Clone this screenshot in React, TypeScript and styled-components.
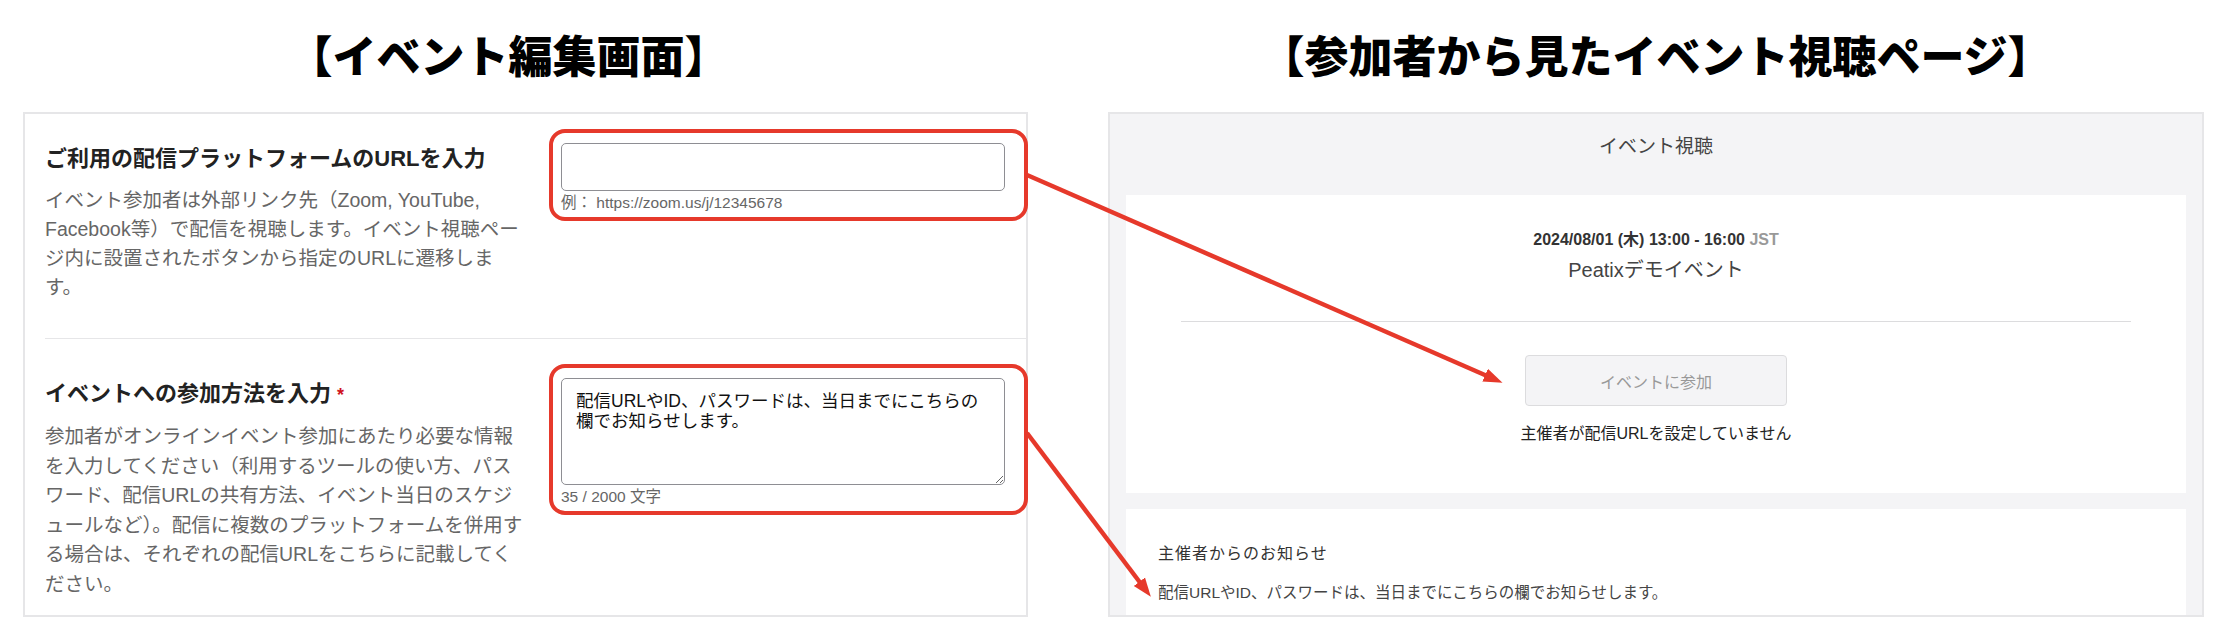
import React from "react";
import styled, { createGlobalStyle } from "styled-components";

const GlobalStyle = createGlobalStyle`
  * {
    box-sizing: border-box;
  }
  body {
    margin: 0;
    background: #fff;
    font-family: "Liberation Sans", "Noto Sans CJK JP", sans-serif;
  }
`;

const Page = styled.div`
  position: relative;
  width: 2222px;
  height: 636px;
  display: flex;
  gap: 80px;
  padding-left: 23px;
  overflow: hidden;
`;

const Column = styled.div<{ $width: number }>`
  width: ${(p) => p.$width}px;
  display: flex;
  flex-direction: column;
`;

const Title = styled.h1<{ $shift?: number }>`
  margin: 31px 0 35px;
  padding-right: ${(p) => p.$shift ?? 0}px;
  font-family: "Noto Sans CJK JP", sans-serif;
  font-size: 44px;
  line-height: 46px;
  font-weight: 900;
  color: #000;
  text-align: center;
  white-space: nowrap;
`;

/* left: event edit form */

const EditPanel = styled.div`
  height: 505px;
  border: 2px solid #e6e6e8;
  background: #fff;
`;

const Section = styled.div<{ $top: number; $divider?: boolean }>`
  margin-left: 20px;
  padding-top: ${(p) => p.$top}px;
  display: flex;
  align-items: flex-start;
  border-bottom: ${(p) => (p.$divider ? "1px solid #e6e6e8" : "none")};
`;

const TextCol = styled.div<{ $bottom: number }>`
  width: 504px;
  flex-shrink: 0;
  padding: 14px 24px ${(p) => p.$bottom}px 0;
`;

const FieldHeading = styled.h2`
  margin: 0 0 11px;
  font-size: 22px;
  line-height: 32px;
  font-weight: 700;
  color: #222;
  white-space: nowrap;
`;

const Required = styled.span`
  margin-left: 6px;
  color: #d0141e;
  font-size: 18px;
`;

const Description = styled.p<{ $lh: number }>`
  margin: 0;
  font-size: 19.5px;
  line-height: ${(p) => p.$lh}px;
  color: #666;
  white-space: nowrap;
`;

const Highlight = styled.div`
  width: 479px;
  flex-shrink: 0;
  border: 4px solid #e6392b;
  border-radius: 16px;
  padding: 10px 8px 5px;
`;

const UrlInput = styled.input`
  display: block;
  width: 444px;
  height: 48px;
  border: 1px solid #8e8e93;
  border-radius: 5px;
  background: #fff;
  outline: none;
`;

const MethodArea = styled.textarea`
  display: block;
  width: 444px;
  height: 107px;
  padding: 13px 14px;
  border: 1px solid #8e8e93;
  border-radius: 5px;
  font-family: "Liberation Sans", "Noto Sans CJK JP", sans-serif;
  font-size: 17.5px;
  line-height: 19.5px;
  color: #111;
  resize: vertical;
  outline: none;
`;

const Hint = styled.div`
  margin-top: 3px;
  font-size: 15.5px;
  line-height: 18px;
  color: #666;
`;

/* right: attendee view */

const ViewPanel = styled.div`
  height: 505px;
  border: 2px solid #e6e6e8;
  background: #f4f4f6;
  padding: 0 16px;
  overflow: hidden;
`;

const ViewHeader = styled.div`
  padding: 20px 0 35px;
  font-size: 19px;
  line-height: 26px;
  color: #444;
  text-align: center;
`;

const Card = styled.div<{ $pad: string; $center?: boolean }>`
  background: #fff;
  padding: ${(p) => p.$pad};
  margin-bottom: 16px;
  text-align: ${(p) => (p.$center ? "center" : "left")};
`;

const DateLine = styled.div`
  font-size: 16px;
  line-height: 20px;
  font-weight: 700;
  color: #333;
`;

const Tz = styled.span`
  color: #999;
`;

const EventName = styled.div`
  margin-top: 6px;
  font-size: 20px;
  line-height: 28px;
  color: #444;
`;

const Rule = styled.hr`
  margin: 37px 0 33px;
  border: none;
  height: 1px;
  background: #dcdcde;
`;

const JoinButton = styled.button`
  width: 262px;
  height: 51px;
  border: 1px solid #dcdcde;
  border-radius: 4px;
  background: #f4f4f6;
  color: #999;
  font-family: inherit;
  font-size: 16px;
`;

const NotSet = styled.div`
  margin-top: 17px;
  font-size: 16px;
  line-height: 22px;
  color: #222;
`;

const NoticeTitle = styled.div`
  font-size: 16px;
  line-height: 24px;
  letter-spacing: 1px;
  color: #333;
`;

const NoticeBody = styled.div`
  margin-top: 15px;
  font-size: 15.5px;
  line-height: 24px;
  color: #444;
`;

const Arrows = styled.svg`
  position: absolute;
  top: 0;
  left: 0;
  pointer-events: none;
`;

const RED = "#e6392b";

export default function App() {
  return (
    <>
      <GlobalStyle />
      <Page>
        <Column $width={1005}>
          <Title $shift={34}>【イベント編集画面】</Title>
          <EditPanel>
            <Section $top={15} $divider>
              <TextCol $bottom={36}>
                <FieldHeading>ご利用の配信プラットフォームのURLを入力</FieldHeading>
                <Description $lh={29}>
                  イベント参加者は外部リンク先（Zoom, YouTube,
                  <br />
                  Facebook等）で配信を視聴します。イベント視聴ペー
                  <br />
                  ジ内に設置されたボタンから指定のURLに遷移しま
                  <br />す。
                </Description>
              </TextCol>
              <Highlight>
                <UrlInput type="text" />
                <Hint>例： https://zoom.us/j/12345678</Hint>
              </Highlight>
            </Section>
            <Section $top={25}>
              <TextCol $bottom={13}>
                <FieldHeading>
                  イベントへの参加方法を入力<Required>*</Required>
                </FieldHeading>
                <Description $lh={29.6}>
                  参加者がオンラインイベント参加にあたり必要な情報
                  <br />
                  を入力してください（利用するツールの使い方、パス
                  <br />
                  ワード、配信URLの共有方法、イベント当日のスケジ
                  <br />
                  ュールなど）。配信に複数のプラットフォームを併用す
                  <br />
                  る場合は、それぞれの配信URLをこちらに記載してく
                  <br />
                  ださい。
                </Description>
              </TextCol>
              <Highlight>
                <MethodArea
                  readOnly
                  value="配信URLやID、パスワードは、当日までにこちらの欄でお知らせします。"
                />
                <Hint>35 / 2000 文字</Hint>
              </Highlight>
            </Section>
          </EditPanel>
        </Column>

        <Column $width={1096}>
          <Title>【参加者から見たイベント視聴ページ】</Title>
          <ViewPanel>
            <ViewHeader>イベント視聴</ViewHeader>
            <Card $pad="35px 55px 48px" $center>
              <DateLine>
                2024/08/01 (木) 13:00 - 16:00 <Tz>JST</Tz>
              </DateLine>
              <EventName>Peatixデモイベント</EventName>
              <Rule />
              <JoinButton disabled>イベントに参加</JoinButton>
              <NotSet>主催者が配信URLを設定していません</NotSet>
            </Card>
            <Card $pad="33px 32px">
              <NoticeTitle>主催者からのお知らせ</NoticeTitle>
              <NoticeBody>
                配信URLやID、パスワードは、当日までにこちらの欄でお知らせします。
              </NoticeBody>
            </Card>
          </ViewPanel>
        </Column>

        <Arrows width={2222} height={636} viewBox="0 0 2222 636">
          <defs>
            <marker
              id="head"
              markerUnits="userSpaceOnUse"
              markerWidth="20"
              markerHeight="16"
              refX="1"
              refY="8"
              orient="auto"
            >
              <path d="M0 1 L19 8 L0 15 Z" fill={RED} />
            </marker>
          </defs>
          <line
            x1={1027}
            y1={175}
            x2={1486}
            y2={375.5}
            stroke={RED}
            strokeWidth={4.5}
            markerEnd="url(#head)"
          />
          <line
            x1={1027}
            y1={433}
            x2={1140}
            y2={582.5}
            stroke={RED}
            strokeWidth={4.5}
            markerEnd="url(#head)"
          />
        </Arrows>
      </Page>
    </>
  );
}
